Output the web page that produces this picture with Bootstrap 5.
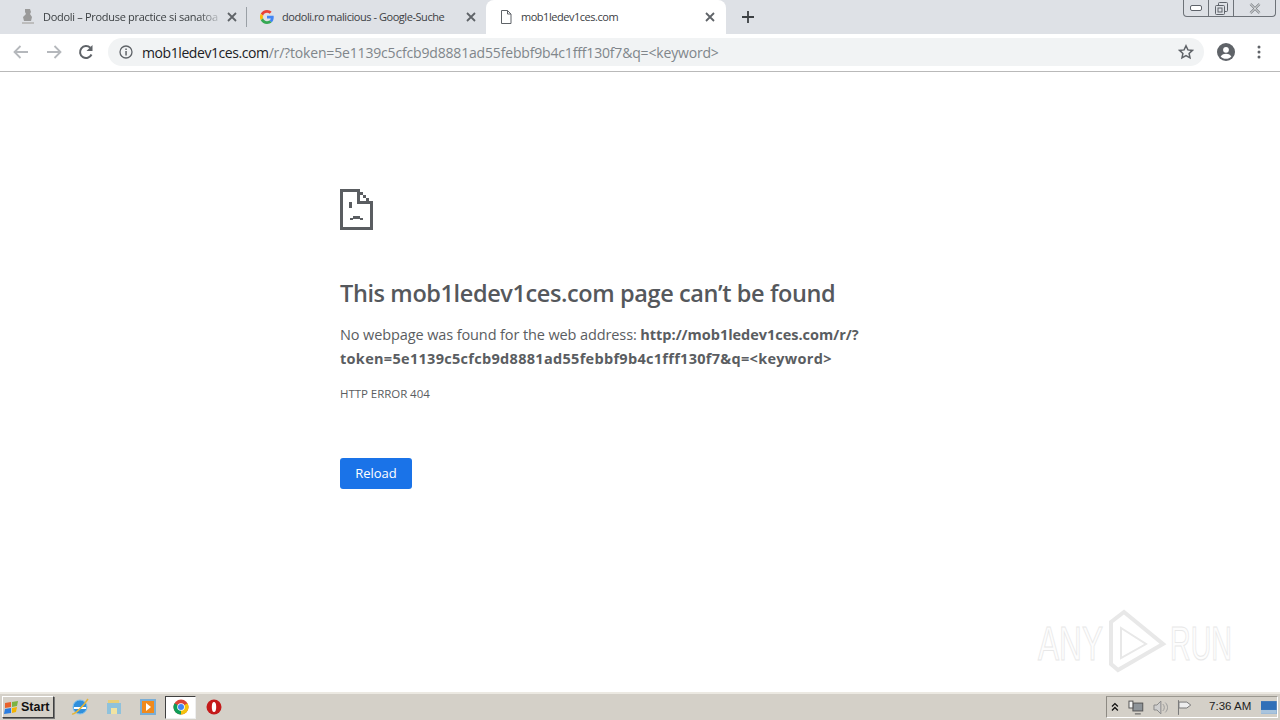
<!DOCTYPE html>
<html lang="en">
<head>
  <meta charset="UTF-8" />
  <meta name="viewport" content="width=device-width, initial-scale=1" />
  <title>mob1ledev1ces.com</title>
  <link href="https://cdn.jsdelivr.net/npm/bootstrap@5.3.0/dist/css/bootstrap.min.css" rel="stylesheet" />
  <style>
    html, body { height: 720px; margin: 0; overflow: hidden; background: #fff; font-family: "Open Sans", "Noto Sans", sans-serif; }
    .shell { width: 1280px; height: 720px; position: relative; }

    .tabstrip { height: 34px; background: #dee1e6; position: relative; }
    .tab-item { height: 34px; padding-left: 21px; padding-right: 10px; font-size: 11px; color: #3c4043; position: relative; letter-spacing: -.3px; }
    .tab-one { width: 247px; }
    .tab-two { width: 239px; padding-left: 13px; letter-spacing: -.45px; }
    .tab-three { width: 240px; background: #fff; border-radius: 8px 8px 0 0; padding-left: 14px; padding-right: 11px; letter-spacing: -.47px; }
    .tab-sep { position: absolute; right: 0; top: 7px; height: 20px; width: 1px; background: #9aa0a6; }
    .tab-label { flex: 1 1 auto; white-space: nowrap; overflow: hidden; margin-left: 8px; }
    .tab-fade { -webkit-mask-image: linear-gradient(to right, #000 88%, #0003); mask-image: linear-gradient(to right, #000 88%, #0003); }
    .tab-three .tab-label { margin-left: 9px; }
    .plus-icon { margin-left: 16px; }
    .winbtns { position: absolute; right: 4px; top: 0; width: 93px; height: 17px; border: 1px solid #6d7278; border-top: 0; border-radius: 0 0 4px 4px; background: #dde0e5; }
    .winbtns > div { height: 16px; }
    .win-min { width: 25px; border-right: 1px solid #6d7278; }
    .win-max { width: 25px; border-right: 1px solid #6d7278; }
    .win-close { flex: 1 1 auto; }

    .toolbar { height: 38px; background: #fff; border-bottom: 1px solid #b9b9b9; padding-left: 12px; padding-bottom: 1px; }
    .tool-btn { width: 18px; height: 18px; flex: none; }
    .omnibox { width: 1096px; height: 28px; margin-left: 13px; border-radius: 14px; background: #f1f3f4; padding-left: 11px; padding-right: 10px; }
    .omni-text { font-size: 14px; letter-spacing: -.17px; margin-left: 9px; color: #80868b; white-space: nowrap; flex: 1 1 auto; }
    .omni-host { color: #202124; letter-spacing: -.42px; }

    .page-body { height: 621px; padding: 117px 0 0 340px; color: #5a5d61; }
    .err-icon { display: block; width: 33px; height: 41px; }
    .err-title { font-size: 23.5px; font-weight: 600; line-height: 30px; margin: 48px 0 0; color: #55585c; letter-spacing: -.39px; }
    .err-text { width: 540px; font-size: 14.5px; line-height: 24px; margin: 15px 0 0; letter-spacing: -.11px; }
    .err-text b { font-weight: 700; letter-spacing: .3px; }
    .err-text .url-head { letter-spacing: -.02px; }
    .err-code { font-size: 11.5px; line-height: 16px; margin-top: 15px; letter-spacing: -.05px; }
    .reload-btn { width: 72px; height: 31px; margin-top: 56px; background: #1a73e8; color: #fff; font-size: 13px; border: 0; border-radius: 3px; padding: 0; display: block; }

    .watermark { position: absolute; left: 1036px; top: 608px; width: 204px; height: 66px; overflow: visible; }
    .mark-text { font-size: 48px; font-family: "Liberation Sans", sans-serif; fill: #fdfdfd; stroke: #e8e8e8; stroke-width: 1px; }

    .taskbar { position: absolute; left: 0; right: 0; bottom: 0; height: 28px; background: #d4d0c8; border-top: 2px solid #ece9e2; }
    .start-btn { width: 52px; height: 22px; margin: 2px 0 0 2px; background: #d4d0c8; border: 1px solid; border-color: #fff #404040 #404040 #fff; box-shadow: 1px 1px 0 #777; font-family: "Liberation Sans", sans-serif; font-size: 12.5px; font-weight: 700; color: #111; padding-left: 1px; }
    .start-logo { margin-right: 1px; }
    .quick-row { padding-left: 71px; }
    .quick-icon { width: 18px; height: 18px; flex: none; }
    .quick-active { width: 31px; height: 23px; background: #fff; border: 1px solid; border-color: #404040 #eee #eee #404040; margin: 0 -7px 0 -8px; }
    .tray { position: absolute; right: 2px; top: 2px; width: 172px; height: 22px; border-left: 1px solid #8d8a83; border-top: 1px solid #9b9890; border-right: 1px solid #fff; border-bottom: 1px solid #fff; padding-left: 4px; }
    .tray-clock { font-family: "Liberation Sans", sans-serif; font-size: 11.5px; color: #222; white-space: nowrap; }
  </style>
</head>
<body>
  <div class="shell">
    <div class="tabstrip d-flex">
      <div class="tab-item tab-one d-flex align-items-center">
        <svg width="14" height="18" viewBox="0 0 14 18"><path d="M4 1h5l1 3-1 2 2 3-1 4H3L2 9l3-3-1-2z" fill="#9a9a9a"/><rect x="1" y="14" width="12" height="2" fill="#bdbdbd"/></svg>
        <span class="tab-label tab-fade">Dodoli – Produse practice si sanatoa</span>
        <svg class="ms-2" width="10" height="10" viewBox="0 0 10 10"><path d="M1 1l8 8M9 1l-8 8" stroke="#5f6368" stroke-width="1.8"/></svg>
        <span class="tab-sep"></span>
      </div>
      <div class="tab-item tab-two d-flex align-items-center">
        <svg width="14" height="14" viewBox="0 0 48 48"><path fill="#ea4335" d="M24 9.5c3.5 0 6.700 1.300 9.100 3.500l6.800-6.800C35.800 2.400 30.300 0 24 0 14.600 0 6.500 5.400 2.600 13.200l7.900 6.200C12.400 13.600 17.700 9.500 24 9.500z"/><path fill="#4285f4" d="M47 24.500c0-1.600-.1-3.100-.4-4.500H24v9h13c-.6 3-2.300 5.500-4.800 7.200l7.700 6c4.500-4.200 7.100-10.300 7.100-17.700z"/><path fill="#fbbc05" d="M10.500 28.600A14.500 14.500 0 0 1 10.500 19.400l-7.900-6.200a24 24 0 0 0 0 21.600z"/><path fill="#34a853" d="M24 48c6.500 0 11.900-2.100 15.900-5.800l-7.700-6c-2.200 1.400-4.900 2.300-8.200 2.300-6.300 0-11.600-4.200-13.500-9.900l-7.900 6.200C6.500 42.600 14.600 48 24 48z"/></svg>
        <span class="tab-label">dodoli.ro malicious - Google-Suche</span>
        <svg class="ms-2" width="10" height="10" viewBox="0 0 10 10"><path d="M1 1l8 8M9 1l-8 8" stroke="#5f6368" stroke-width="1.8"/></svg>
      </div>
      <div class="tab-item tab-three d-flex align-items-center">
        <svg width="12" height="14" viewBox="0 0 12 14"><path d="M1.500.5h6l3.500 3.500v9.500h-9.500zM7.500.5v3.500h3.500" fill="#fff" stroke="#5f6368"/></svg>
        <span class="tab-label">mob1ledev1ces.com</span>
        <svg class="ms-2" width="10" height="10" viewBox="0 0 10 10"><path d="M1 1l8 8M9 1l-8 8" stroke="#5f6368" stroke-width="1.8"/></svg>
      </div>
      <svg class="plus-icon align-self-center" width="12" height="12" viewBox="0 0 12 12"><path d="M6 0v12M0 6h12" stroke="#3c4043" stroke-width="1.800"/></svg>
      <div class="winbtns d-flex">
        <div class="win-min d-flex align-items-center justify-content-center"><svg width="12" height="6"><rect x=".5" y=".5" width="11" height="5" rx="1.500" fill="#fff" stroke="#5e636a"/></svg></div>
        <div class="win-max d-flex align-items-center justify-content-center"><svg width="13" height="13"><rect x="3.500" y=".5" width="9" height="9" rx="1" fill="none" stroke="#5e636a"/><rect x=".5" y="3.500" width="9" height="9" rx="1" fill="#dde0e5" stroke="#5e636a"/><rect x="3" y="6" width="4" height="4" fill="none" stroke="#5e636a"/></svg></div>
        <div class="win-close d-flex align-items-center justify-content-center"><svg width="12" height="11"><path d="M1.500 1l9 9M10.500 1l-9 9" stroke="#6d7278" stroke-width="2.400"/><path d="M1.500 1l9 9M10.500 1l-9 9" stroke="#fff" stroke-width="1"/></svg></div>
      </div>
    </div>

    <div class="toolbar d-flex align-items-center">
      <svg class="tool-btn" viewBox="0 0 18 18"><path d="M16 9H3M8.500 3L2.500 9l6 6" fill="none" stroke="#b5b8bc" stroke-width="1.800"/></svg>
      <svg class="tool-btn" style="margin-left:15px" viewBox="0 0 18 18"><path d="M2 9h13M9.500 3l6 6-6 6" fill="none" stroke="#b5b8bc" stroke-width="1.800"/></svg>
      <svg class="tool-btn" style="margin-left:14px" viewBox="0 0 18 18"><path d="M14.500 11.500A6 6 0 1 1 13.300 4.800" fill="none" stroke="#5f6368" stroke-width="2"/><path d="M15.500 2v6h-6z" fill="#5f6368"/></svg>
      <div class="omnibox d-flex align-items-center">
        <svg width="14" height="14" viewBox="0 0 14 14" class="flex-shrink-0"><circle cx="7" cy="7" r="6" fill="none" stroke="#5f6368" stroke-width="1.300"/><rect x="6.300" y="6" width="1.500" height="4.500" fill="#5f6368"/><rect x="6.300" y="3.500" width="1.500" height="1.500" fill="#5f6368"/></svg>
        <div class="omni-text"><span class="omni-host">mob1ledev1ces.com</span>/r/?token=5e1139c5cfcb9d8881ad55febbf9b4c1fff130f7&amp;q=&lt;keyword&gt;</div>
        <svg width="16" height="16" viewBox="0 0 16 16" class="flex-shrink-0"><path d="M8 1.800l1.900 4.100 4.500.5-3.300 3 .9 4.500L8 11.600l-4 2.300.9-4.500-3.300-3 4.500-.5z" fill="none" stroke="#5f6368" stroke-width="1.500"/></svg>
      </div>
      <svg width="18" height="18" viewBox="0 0 18 18" style="margin-left:13px" class="flex-shrink-0"><circle cx="9" cy="9" r="9" fill="#5f6368"/><circle cx="9" cy="6.800" r="2.900" fill="#fff"/><path d="M3.600 13.400c1.400-2 3.400-2.700 5.400-2.700s4 .7 5.400 2.700c-1.400 1.600-3.300 2.400-5.400 2.400s-4-.8-5.400-2.400z" fill="#fff"/></svg>
      <svg width="4" height="14" viewBox="0 0 4 14" style="margin-left:22px" class="flex-shrink-0"><circle cx="2" cy="2" r="1.500" fill="#5f6368"/><circle cx="2" cy="7" r="1.500" fill="#5f6368"/><circle cx="2" cy="12" r="1.500" fill="#5f6368"/></svg>
    </div>

    <main class="page-body">
      <svg class="err-icon" viewBox="0 0 34 42" shape-rendering="crispEdges" fill="#5a5d61">
        <path d="M0 0h21v3H3v36h28V15h3v27H0z"/>
        <path d="M18 0h3v12h13v3H18z"/>
        <path d="M21 3h3v3h-3zM24 6h3v3h-3zM27 9h3v3h-3zM30 12h4v3h-4z"/>
        <rect x="9" y="13" width="3" height="6"/>
        <path d="M10 30h3v-2h8v2h3v2h-3v-1h-8v1h-3z"/>
      </svg>
      <h1 class="err-title">This mob1ledev1ces.com page can’t be found</h1>
      <p class="err-text">No webpage was found for the web address: <b class="url-head">http://mob1ledev1ces.com/r/?</b><br><b>token=5e1139c5cfcb9d8881ad55febbf9b4c1fff130f7&amp;q=&lt;keyword&gt;</b></p>
      <div class="err-code">HTTP ERROR 404</div>
      <button class="btn reload-btn" type="button">Reload</button>
    </main>

    <svg class="watermark" viewBox="0 0 204 66">
      <text class="mark-text" x="2" y="52" textLength="65" lengthAdjust="spacingAndGlyphs">ANY</text>
      <path d="M75 14L88 4L127 36L82 62L75 56z" fill="none" stroke="#e8e8e8" stroke-width="4"/>
      <path d="M85 20V50L110 36z" fill="none" stroke="#e8e8e8" stroke-width="2"/>
      <text class="mark-text" x="134" y="52" textLength="62" lengthAdjust="spacingAndGlyphs">RUN</text>
    </svg>

    <footer class="taskbar">
      <div class="start-btn d-flex align-items-center position-absolute">
        <svg width="16" height="15" viewBox="0 0 16 15" class="start-logo"><path d="M1 3l6-1v5l-6 1z" fill="#e8622c"/><path d="M8 2l6-1-1 5-5 1z" fill="#7cb342"/><path d="M1 9l6-1v5l-7 1z" fill="#2a7de1"/><path d="M8 8l5-1-1 5-4 1z" fill="#f4b400"/></svg>Start
      </div>
      <div class="quick-row d-flex align-items-center gap-3 h-100">
        <svg class="quick-icon" viewBox="0 0 18 18"><circle cx="9" cy="9" r="7" fill="#2f8fdc" stroke="#7ec1ef"/><path d="M3 10h12" stroke="#fff" stroke-width="2"/><path d="M1 16C4 17 13 7 17 1" fill="none" stroke="#e3b53a" stroke-width="1.500"/></svg>
        <svg class="quick-icon" viewBox="0 0 18 18"><path d="M3 2h11v3H3z" fill="#e8cf7a"/><path d="M2 5h14v11H2z" fill="#8fc2dc"/><path d="M6 10h6v6H6z" fill="#f1e3a2"/></svg>
        <svg class="quick-icon" viewBox="0 0 18 18"><rect x="1" y="1" width="16" height="16" fill="#7aaed6"/><rect x="3" y="3" width="12" height="12" fill="#f08a1d"/><path d="M7 5l5 4-5 4z" fill="#fff"/></svg>
        <div class="quick-active d-flex align-items-center justify-content-center">
          <svg width="16" height="16" viewBox="0 0 16 16"><circle cx="8" cy="8" r="7.500" fill="#db4437"/><path d="M8 8L14.500 4.200A7.500 7.500 0 0 1 8 15.500z" fill="#f4c20d"/><path d="M8 8L8 15.500A7.500 7.500 0 0 1 1.500 4.200z" fill="#0f9d58"/><circle cx="8" cy="8" r="3.800" fill="#fff"/><circle cx="8" cy="8" r="3" fill="#4285f4"/></svg>
        </div>
        <svg class="quick-icon" viewBox="0 0 18 18"><circle cx="9" cy="9" r="7.500" fill="#c41a1a"/><ellipse cx="9" cy="9" rx="2.200" ry="5" fill="#fff"/></svg>
      </div>
      <div class="tray d-flex align-items-center">
        <svg width="8" height="10" viewBox="0 0 8 10"><path d="M1 4.500l3-3 3 3M1 8.500l3-3 3 3" fill="none" stroke="#111" stroke-width="1.300"/></svg>
        <svg width="16" height="15" viewBox="0 0 16 15" style="margin-left:9px"><rect x="5" y="3" width="10" height="8" fill="#8e9499" stroke="#555"/><rect x="1" y="1" width="4" height="7" fill="#f5f5f5" stroke="#555"/><path d="M7 14h6" stroke="#555"/></svg>
        <svg width="16" height="15" viewBox="0 0 16 15" style="margin-left:9px"><path d="M1 5h3l4-4v13l-4-4H1z" fill="#cfcfcf" stroke="#8a8a8a"/><path d="M10 4c2 2 2 5 0 7M12.500 2.500c3 3 3 7 0 10" fill="none" stroke="#9a9a9a"/></svg>
        <svg width="15" height="15" viewBox="0 0 15 15" style="margin-left:9px"><path d="M1.500 0v15" stroke="#777"/><path d="M2 2h8l4 3-4 3H2z" fill="#eee" stroke="#777"/></svg>
        <span class="tray-clock" style="margin-left:17px">7:36 AM</span>
        <svg width="16" height="13" viewBox="0 0 16 13" style="margin-left:10px"><rect width="16" height="13" fill="#2f6fb8"/><rect y="9" width="16" height="4" fill="#a9c4dd"/></svg>
      </div>
    </footer>
  </div>
  <script src="https://cdn.jsdelivr.net/npm/bootstrap@5.3.0/dist/js/bootstrap.bundle.min.js"></script>
</body>
</html>
